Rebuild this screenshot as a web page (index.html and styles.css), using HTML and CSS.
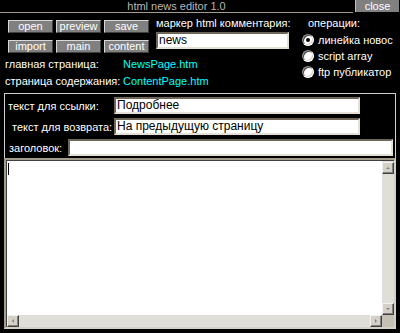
FILE: index.html
```html
<!DOCTYPE html>
<html lang="ru">
<head>
    <meta charset="UTF-8">
    <title>html news editor 1.0</title>
    <link rel="stylesheet" href="styles.css">
</head>
<body>
<div class="window">
    <div class="titlebar">
        <div class="title">html news editor 1.0</div>
        <div class="close">close</div>
    </div>

    <div class="head">
        <div class="left">
            <div class="controls">
                <div class="buttons">
                    <div class="btn">open</div>
                    <div class="btn">preview</div>
                    <div class="btn">save</div>
                    <div class="btn">import</div>
                    <div class="btn">main</div>
                    <div class="btn">content</div>
                </div>
                <div class="marker">
                    <div class="label">маркер html комментария:</div>
                    <div class="input marker-input">news</div>
                </div>
            </div>
            <div class="links">
                <div>главная страница:</div>
                <div class="link">NewsPage.htm</div>
                <div>страница содержания:</div>
                <div class="link">ContentPage.htm</div>
            </div>
        </div>
        <div class="ops">
            <div class="label">операции:</div>
            <div class="radio"><span class="dot checked"></span>линейка новос</div>
            <div class="radio"><span class="dot"></span>script array</div>
            <div class="radio"><span class="dot"></span>ftp публикатор</div>
        </div>
    </div>

    <div class="fields">
        <div class="row">
            <span class="flabel first">текст для ссылки:</span>
            <div class="input short">Подробнее</div>
        </div>
        <div class="row">
            <span class="flabel second">текст для возврата:</span>
            <div class="input short">На предыдущую страницу</div>
        </div>
        <div class="row">
            <span class="flabel third">заголовок:</span>
            <div class="input wide"></div>
        </div>
    </div>

    <div class="editor">
        <div class="text"><span class="caret"></span></div>
        <div class="vbar">
            <div class="sbtn"><span class="arr up"></span></div>
            <div class="track"></div>
            <div class="sbtn"><span class="arr down"></span></div>
        </div>
        <div class="hbar">
            <div class="sbtn"><span class="arr lt"></span></div>
            <div class="track"></div>
            <div class="sbtn"><span class="arr rt"></span></div>
        </div>
        <div class="corner"></div>
    </div>
</div>
</body>
</html>
```

FILE: styles.css
```css
body {
    margin: 0;
    background-color: #000;
    color: #fff;
    font-family: "Liberation Sans", Arial, sans-serif;
    font-size: 11px;
    white-space: nowrap;
}
.window {
    width: 400px;
    height: 333px;
    overflow: hidden;
}
.titlebar {
    display: flex;
    align-items: flex-start;
}
.title {
    flex: 1;
    height: 12px;
    line-height: 12px;
    text-align: center;
    color: #b8b8b8;
    border-bottom: 1px solid #a49c8c;
}
.close {
    width: 43px;
    height: 12px;
    line-height: 12px;
    margin: 0 1px 0 2px;
    background-color: #808080;
    border-left: 1px solid #c0c0c0;
    text-align: center;
}
.head {
    display: flex;
    padding-top: 4px;
}
.left {
    width: 302px;
    flex-shrink: 0;
}
.controls {
    display: flex;
}
.buttons {
    display: grid;
    grid-template-columns: repeat(3, 45px);
    grid-auto-rows: 13px;
    column-gap: 3px;
    row-gap: 7px;
    margin: 3px 0 0 8px;
}
.btn {
    box-sizing: border-box;
    background-color: #808080;
    border: 1px solid;
    border-color: #d8d8d8 #404040 #404040 #d8d8d8;
    text-align: center;
    line-height: 11px;
}
.marker {
    margin-left: 7px;
}
.label {
    height: 13px;
    line-height: 13px;
}
.input {
    box-sizing: border-box;
    height: 17px;
    background-color: #fff;
    color: #000;
    border: 2px solid;
    border-color: #6e6658 #e4e0d8 #e4e0d8 #6e6658;
    padding-left: 1px;
    line-height: 13px;
    font-size: 12px;
    overflow: hidden;
}
.marker-input {
    width: 133px;
    margin-top: 2px;
}
.links {
    display: grid;
    grid-template-columns: 118px auto;
    grid-auto-rows: 17px;
    line-height: 17px;
    margin: 3px 0 0 5px;
}
.link {
    color: #00ffff;
}
.ops .label {
    padding-left: 6px;
    margin-bottom: 2px;
}
.radio {
    display: flex;
    align-items: center;
    height: 16px;
}
.dot {
    box-sizing: border-box;
    flex-shrink: 0;
    width: 12px;
    height: 12px;
    margin-right: 4px;
    border-radius: 50%;
    border: 1px solid;
    border-color: #808080 #fff #fff #808080;
    background-color: #fff;
    box-shadow: inset 1px 1px 0 #404040, inset -1px -1px 0 #d4d0c8;
    position: relative;
}
.dot.checked::after {
    content: "";
    position: absolute;
    left: 3px;
    top: 3px;
    width: 4px;
    height: 4px;
    border-radius: 50%;
    background-color: #000;
}
.fields {
    margin: 3px 4px 0 4px;
    border: 1px solid #d0d0d0;
    border-bottom: none;
    padding: 3px 0 2px 0;
}
.row {
    display: flex;
    align-items: center;
    margin-bottom: 4px;
}
.row:last-child {
    margin-bottom: 0;
}
.flabel {
    flex-shrink: 0;
    box-sizing: border-box;
}
.flabel.first {
    width: 109px;
    padding-left: 3px;
}
.flabel.second {
    width: 109px;
    padding-left: 7px;
}
.flabel.third {
    width: 63px;
    padding-left: 4px;
}
.input.short {
    width: 246px;
}
.input.wide {
    width: 325px;
}
.editor {
    box-sizing: border-box;
    width: 392px;
    height: 171px;
    margin: 0 4px;
    border: 2px solid;
    border-color: #a49c8c #d4d0c8 #d4d0c8 #a49c8c;
    box-shadow: inset 1px 1px 0 #404040;
    background-color: #fff;
    display: grid;
    grid-template-columns: 1fr 12px;
    grid-template-rows: 1fr 12px;
    padding: 1px 0 0 1px;
}
.text {
    padding: 2px 0 0 1px;
}
.caret {
    display: block;
    width: 1px;
    height: 12px;
    background-color: #000;
}
.vbar {
    display: flex;
    flex-direction: column;
    background-color: #e0ded8;
    padding-top: 1px;
}
.hbar {
    display: flex;
    background-color: #e0ded8;
}
.track {
    flex: 1;
}
.sbtn {
    box-sizing: border-box;
    width: 12px;
    height: 12px;
    background-color: #d4d0c8;
    border: 1px solid;
    border-color: #f4f2ee #404040 #404040 #f4f2ee;
    box-shadow: inset -1px -1px 0 #808080;
    display: flex;
    align-items: center;
    justify-content: center;
}
.arr {
    width: 0;
    height: 0;
    border: 2px solid transparent;
}
.arr.up {
    border-bottom-color: #808080;
    border-top-width: 0;
}
.arr.down {
    border-top-color: #808080;
    border-bottom-width: 0;
}
.arr.lt {
    border-right-color: #808080;
    border-left-width: 0;
}
.arr.rt {
    border-left-color: #808080;
    border-right-width: 0;
}
.corner {
    background-color: #c4c0b4;
}
```
